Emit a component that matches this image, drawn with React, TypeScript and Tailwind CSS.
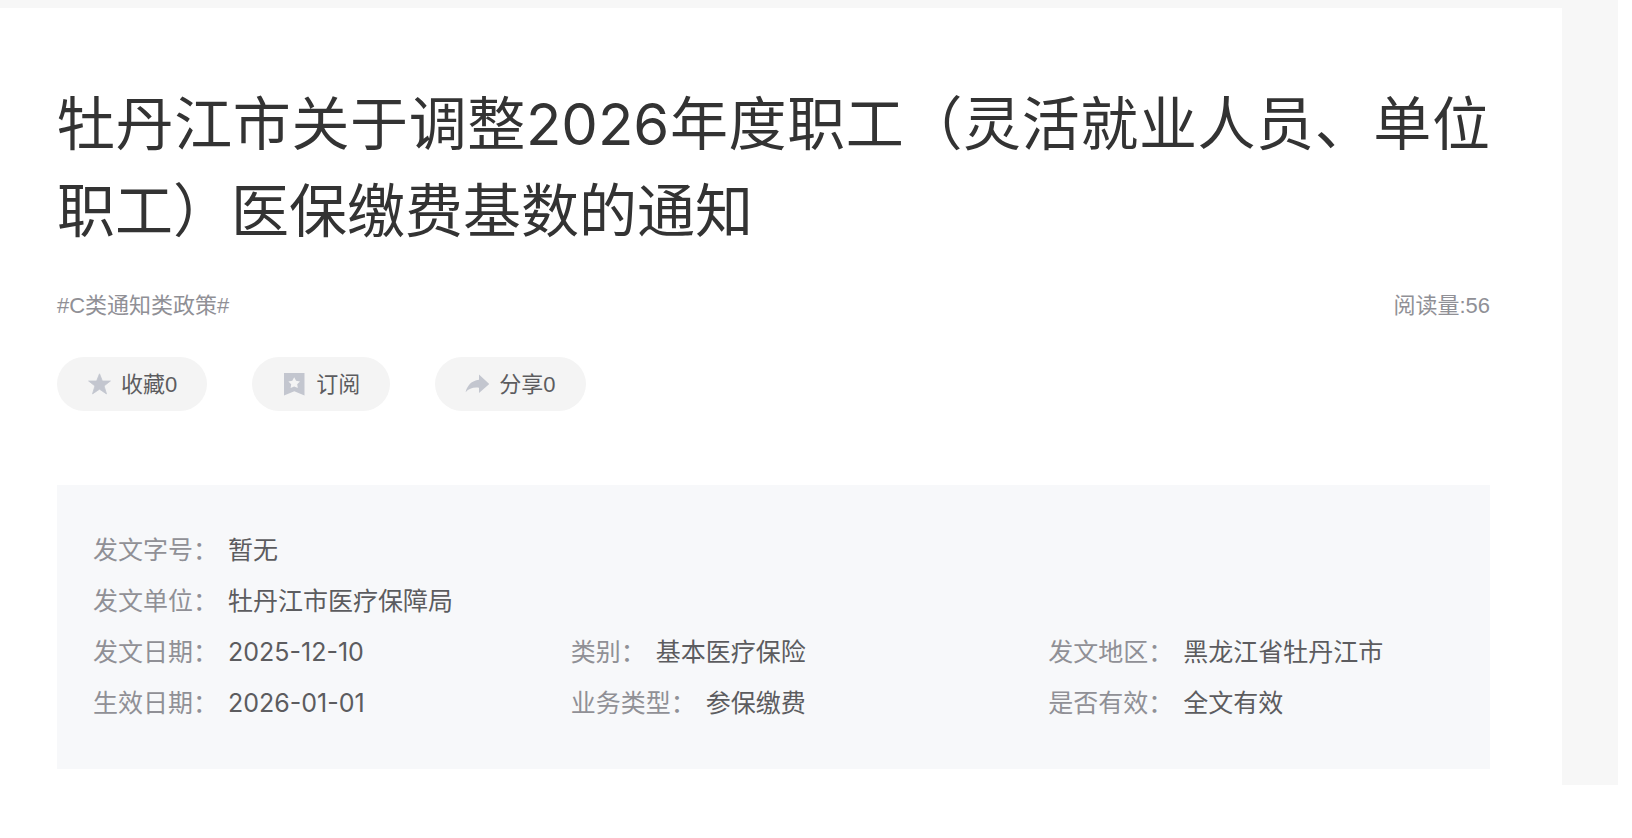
import type { ReactNode } from "react";

function StarIcon() {
  return (
    <svg viewBox="0 0 24 24" className="size-6 fill-[#c3c6cf]" aria-hidden="true">
      <path
        d="M12.5 1.8l2.9 7.2h8l-6.3 4.9 2.4 8-7-4.7-7 4.700 2.400-8L1.600 9h8z"
        className="stroke-[#c3c6cf]"
        strokeWidth="0.8"
        strokeLinejoin="round"
      />
    </svg>
  );
}

function BookmarkIcon() {
  return (
    <svg viewBox="0 0 24 24" className="size-6 fill-[#c3c6cf]" aria-hidden="true">
      <path
        fillRule="evenodd"
        d="M2 1h20.5v22.5l-10.2-4.3L2 23.500zM12.200 5.200l-1.900 3.500-3.900.700 2.800 2.800-.600 3.900 3.600-1.700 3.600 1.700-.6-3.900 2.800-2.800-3.900-.700z"
      />
    </svg>
  );
}

function ShareIcon() {
  return (
    <svg viewBox="0 0 24 24" className="size-6 fill-[#c3c6cf]" aria-hidden="true">
      <path d="M14 2.400L24.300 12 14 21v-5.200C8.500 15 4 16.500.6 20.200 2 13.800 6.500 8.600 14 7.800z" />
    </svg>
  );
}

function ActionButton({ icon, label }: { icon: ReactNode; label: string }) {
  return (
    <button
      type="button"
      className="flex h-[54px] items-center gap-[10px] rounded-full bg-[#f4f4f4] px-[30px] text-[22px] text-[#5c5c5f]"
    >
      {icon}
      {label}
    </button>
  );
}

function Field({ label, value, wide }: { label: string; value: string; wide?: boolean }) {
  return (
    <div className={wide ? "col-span-3 flex gap-[10px]" : "flex gap-[10px]"}>
      <dt className="text-[#909096]">{label}：</dt>
      <dd className="font-['Inter','Noto_Sans_CJK_SC',sans-serif] text-[#5c5c5f]">{value}</dd>
    </div>
  );
}

export default function App() {
  return (
    <div
      lang="zh-CN"
      className="min-h-screen bg-white pb-[52px] font-['Liberation_Sans','Noto_Sans_CJK_SC',sans-serif]"
    >
      <div className="mr-[14px] bg-[#f7f7f7] pt-2 pr-14">
        <main className="bg-white pt-[73px] pr-[72px] pb-4 pl-[57px]">
          <h1 className="text-justify font-['Inter','Noto_Sans_CJK_SC',sans-serif] text-[58px] leading-[87px] text-[#333]">
            牡丹江市关于调整2026年度职工（灵活就业人员、单位职工）医保缴费基数的通知
          </h1>

          <div className="mt-[35px] flex justify-between text-[22px] leading-8 text-[#909096]">
            <a href="#">#C类通知类政策#</a>
            <span>阅读量:56</span>
          </div>

          <div className="mt-[35px] flex gap-[45px]">
            <ActionButton icon={<StarIcon />} label="收藏0" />
            <ActionButton icon={<BookmarkIcon />} label="订阅" />
            <ActionButton icon={<ShareIcon />} label="分享0" />
          </div>

          <dl className="mt-[74px] grid grid-cols-3 gap-x-9 bg-[#f7f8fa] py-10 pl-9 text-[25px] leading-[51px]">
            <Field label="发文字号" value="暂无" wide />
            <Field label="发文单位" value="牡丹江市医疗保障局" wide />
            <Field label="发文日期" value="2025-12-10" />
            <Field label="类别" value="基本医疗保险" />
            <Field label="发文地区" value="黑龙江省牡丹江市" />
            <Field label="生效日期" value="2026-01-01" />
            <Field label="业务类型" value="参保缴费" />
            <Field label="是否有效" value="全文有效" />
          </dl>
        </main>
      </div>
    </div>
  );
}
